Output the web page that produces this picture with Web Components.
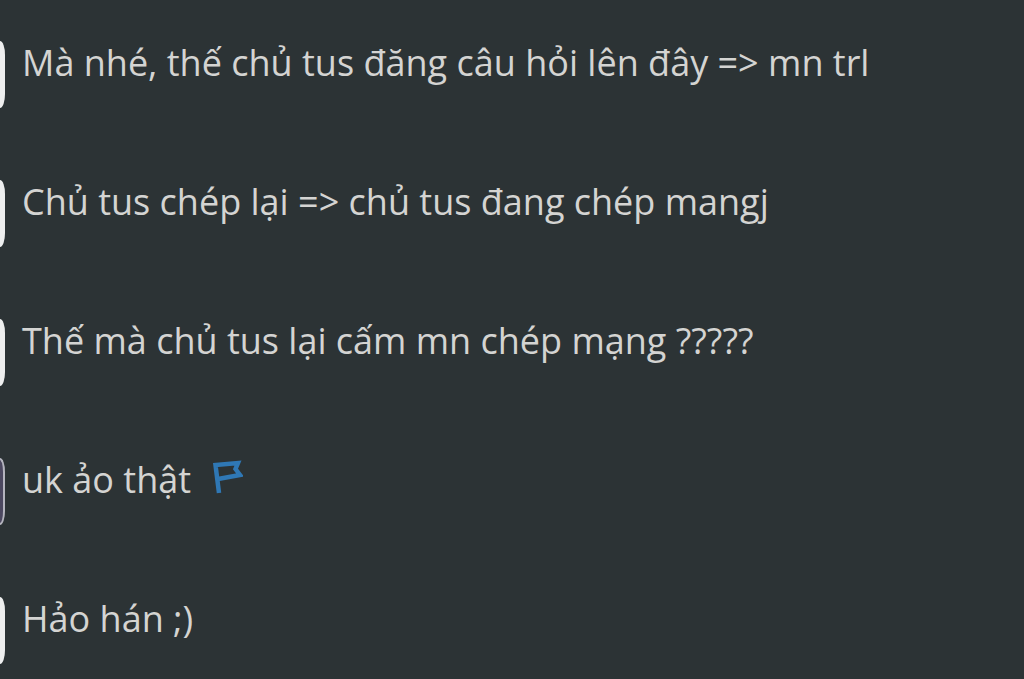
<!DOCTYPE html>
<html lang="vi">
<head>
<meta charset="utf-8">
<meta name="viewport" content="width=device-width, initial-scale=1">
<title>Comments</title>
<style>
html { background: #2c3335; }
body { margin: 0; }
</style>
</head>
<body>
<comment-list>
<comment-row>Mà nhé, thế chủ tus đăng câu hỏi lên đây =&gt; mn trl</comment-row>
<comment-row>Chủ tus chép lại =&gt; chủ tus đang chép mangj</comment-row>
<comment-row>Thế mà chủ tus lại cấm mn chép mạng ?????</comment-row>
<comment-row outlined>uk ảo thật<flag-icon slot="action"></flag-icon></comment-row>
<comment-row>Hảo hán ;)</comment-row>
</comment-list>
<script>
const define = (name, html) => {
  const template = document.createElement('template');
  template.innerHTML = html;
  customElements.define(name, class extends HTMLElement {
    constructor() {
      super();
      this.attachShadow({ mode: 'open' }).append(template.content.cloneNode(true));
    }
  });
};

define('comment-list', `
<style>
:host {
  display: grid;
  grid-auto-rows: 67px;
  row-gap: 72px;
  padding-top: 41px;
  background: #2c3335;
  color: #d4d4d2;
  font: 36px/44px "Open Sans", "Noto Sans", sans-serif;
}
</style>
<slot></slot>`);

define('comment-row', `
<style>
:host { display: flex; align-items: flex-start; }
.avatar {
  flex: none;
  box-sizing: border-box;
  width: 5px;
  height: 67px;
  margin-right: 17px;
  border-radius: 0 5px 5px 0 / 0 14px 14px 0;
  background: #eeefef;
}
:host([outlined]) .avatar {
  border: 2px solid #b4b4be;
  border-left: 0;
  background: #4c4860;
}
p { margin: 0; white-space: nowrap; }
</style>
<div class="avatar"></div>
<p><slot></slot></p>
<slot name="action"></slot>`);

define('flag-icon', `
<style>
:host { display: block; margin-left: 22px; }
svg { display: block; }
</style>
<svg width="30" height="36" viewBox="0 0 30 36" fill="none" stroke="#2f78b5" stroke-width="4.5" aria-hidden="true">
<path d="M6 35L2.500 7L25 5L22.500 11L27 17L5 21"/>
</svg>`);
</script>
</body>
</html>
